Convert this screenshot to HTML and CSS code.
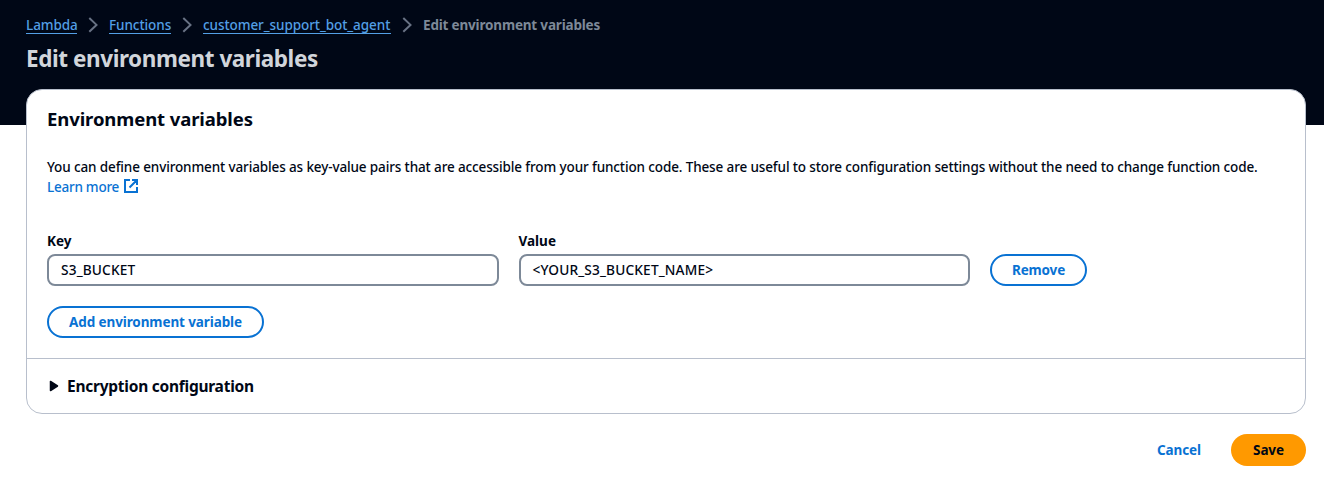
FILE: index.html
```html
<!DOCTYPE html>
<html lang="en">
<head>
<meta charset="utf-8">
<title>Edit environment variables</title>
<link rel="stylesheet" href="styles.css">
</head>
<body>
<div class="page">
  <nav class="crumbs">
    <a class="crumb c1">Lambda</a>
    <svg class="chev" viewBox="0 0 10 16"><path d="M1.300 1.500l7.200 6.900-7.200 6.900"/></svg>
    <a class="crumb c2">Functions</a>
    <svg class="chev" viewBox="0 0 10 16"><path d="M1.300 1.500l7.200 6.900-7.200 6.900"/></svg>
    <a class="crumb c3">customer_support_bot_agent</a>
    <svg class="chev" viewBox="0 0 10 16"><path d="M1.300 1.500l7.200 6.900-7.200 6.900"/></svg>
    <span class="current">Edit environment variables</span>
  </nav>
  <h1>Edit environment variables</h1>
  <main class="card">
    <section class="content">
      <h2>Environment variables</h2>
      <p class="intro">You can define environment variables as key-value pairs that are accessible from your function code. These are useful to store configuration settings without the need to change function code.</p>
      <a class="learn"><span>Learn more</span><svg class="external" viewBox="0 0 16 16"><path d="M7 2H2v12h12V9M9 2h5v5M14 2L6.500 9.500"/></svg></a>
      <div class="row">
        <label class="field"><span class="label">Key</span><span class="input">S3_BUCKET</span></label>
        <label class="field"><span class="label">Value</span><span class="input">&lt;YOUR_S3_BUCKET_NAME&gt;</span></label>
        <button class="button remove">Remove</button>
      </div>
      <button class="button add">Add environment variable</button>
    </section>
    <section class="expand">
      <svg class="caret" viewBox="0 0 10 12"><path d="M1.500 1.500v9L8.500 6z"/></svg>
      <h3>Encryption configuration</h3>
    </section>
  </main>
  <footer class="actions">
    <button class="cancel">Cancel</button>
    <button class="save">Save</button>
  </footer>
</div>
</body>
</html>
```
FILE: styles.css
```css
* { box-sizing: border-box; }
body { margin: 0; background: #fff; color: #000716; font-family: "Noto Sans", "Open Sans", sans-serif; font-size: 14px; line-height: 20px; }
.page { height: 487px; padding: 15px 18px 0 26px; background: linear-gradient(#000716 125px, #fff 125px); white-space: nowrap; }
.crumbs { display: flex; height: 20px; }
.crumb { color: #539fe5; height: 19px; border-bottom: 1px solid #539fe5; font-weight: 500; font-size: 13.5px; letter-spacing: -0.07px; }
.c1 { width: 51px; }
.c2 { width: 62px; }
.c3 { width: 188px; }
.chev { width: 10px; height: 17px; margin: 1px 11px 0; fill: none; stroke: #687284; stroke-width: 2; }
.current { color: #7d8998; font-weight: 700; font-size: 13.5px; letter-spacing: -0.18px; }
h1, h2, h3, p { margin: 0; }
h1 { height: 30px; margin-top: 9px; color: #d1d5db; font-size: 22.5px; line-height: 30px; letter-spacing: -0.43px; }
.card { height: 325px; margin-top: 15px; border: 1px solid #b8bfcc; border-radius: 16px; background: #fff; }
.content { height: 269px; padding: 17px 20px 0; border-bottom: 1px solid #b8bfcc; }
h2 { height: 24px; font-size: 18.5px; line-height: 23px; letter-spacing: -0.1px; }
.intro { margin-top: 26px; height: 20px; font-weight: 500; font-size: 13.5px; letter-spacing: -0.125px; }
.learn { display: flex; align-items: center; color: #0972d3; height: 20px; gap: 4px; font-weight: 500; font-size: 13.5px; letter-spacing: -0.25px; }
.external { width: 16px; height: 16px; margin-top: -2px; fill: none; stroke: #0972d3; stroke-width: 2; }
.row { display: flex; align-items: flex-end; gap: 20px; margin-top: 33px; height: 56px; }
.field { display: block; width: 451.5px; }
.label { display: block; height: 20px; margin-bottom: 4px; padding-top: 1px; font-weight: 700; font-size: 13.5px; }
.input { display: flex; align-items: center; height: 32px; padding: 0 12px; border: 2px solid #7d8998; border-radius: 8px; font-weight: 500; font-size: 13.7px; letter-spacing: 0.15px; }
button { font: 700 13.5px/20px "Noto Sans", "Open Sans", sans-serif; padding: 0; border: 0; background: none; color: #0972d3; }
.button { height: 32px; border: 2px solid #0972d3; border-radius: 20px; }
.remove { width: 97px; letter-spacing: -0.15px; }
.add { display: block; width: 217px; margin-top: 20px; letter-spacing: -0.1px; }
.expand { display: flex; align-items: center; height: 54px; padding-left: 22px; }
.caret { width: 10px; height: 12px; margin-right: 8px; fill: #000716; stroke: #000716; stroke-width: 1.500; stroke-linejoin: round; }
h3 { font-size: 15.5px; letter-spacing: -0.25px; }
.actions { display: flex; justify-content: flex-end; margin-top: 20px; height: 32px; }
.cancel { width: 86px; margin-right: 9px; letter-spacing: -0.1px; }
.save { width: 75px; border-radius: 16px; background: #ff9900; color: #000716; letter-spacing: -0.1px; }
```
